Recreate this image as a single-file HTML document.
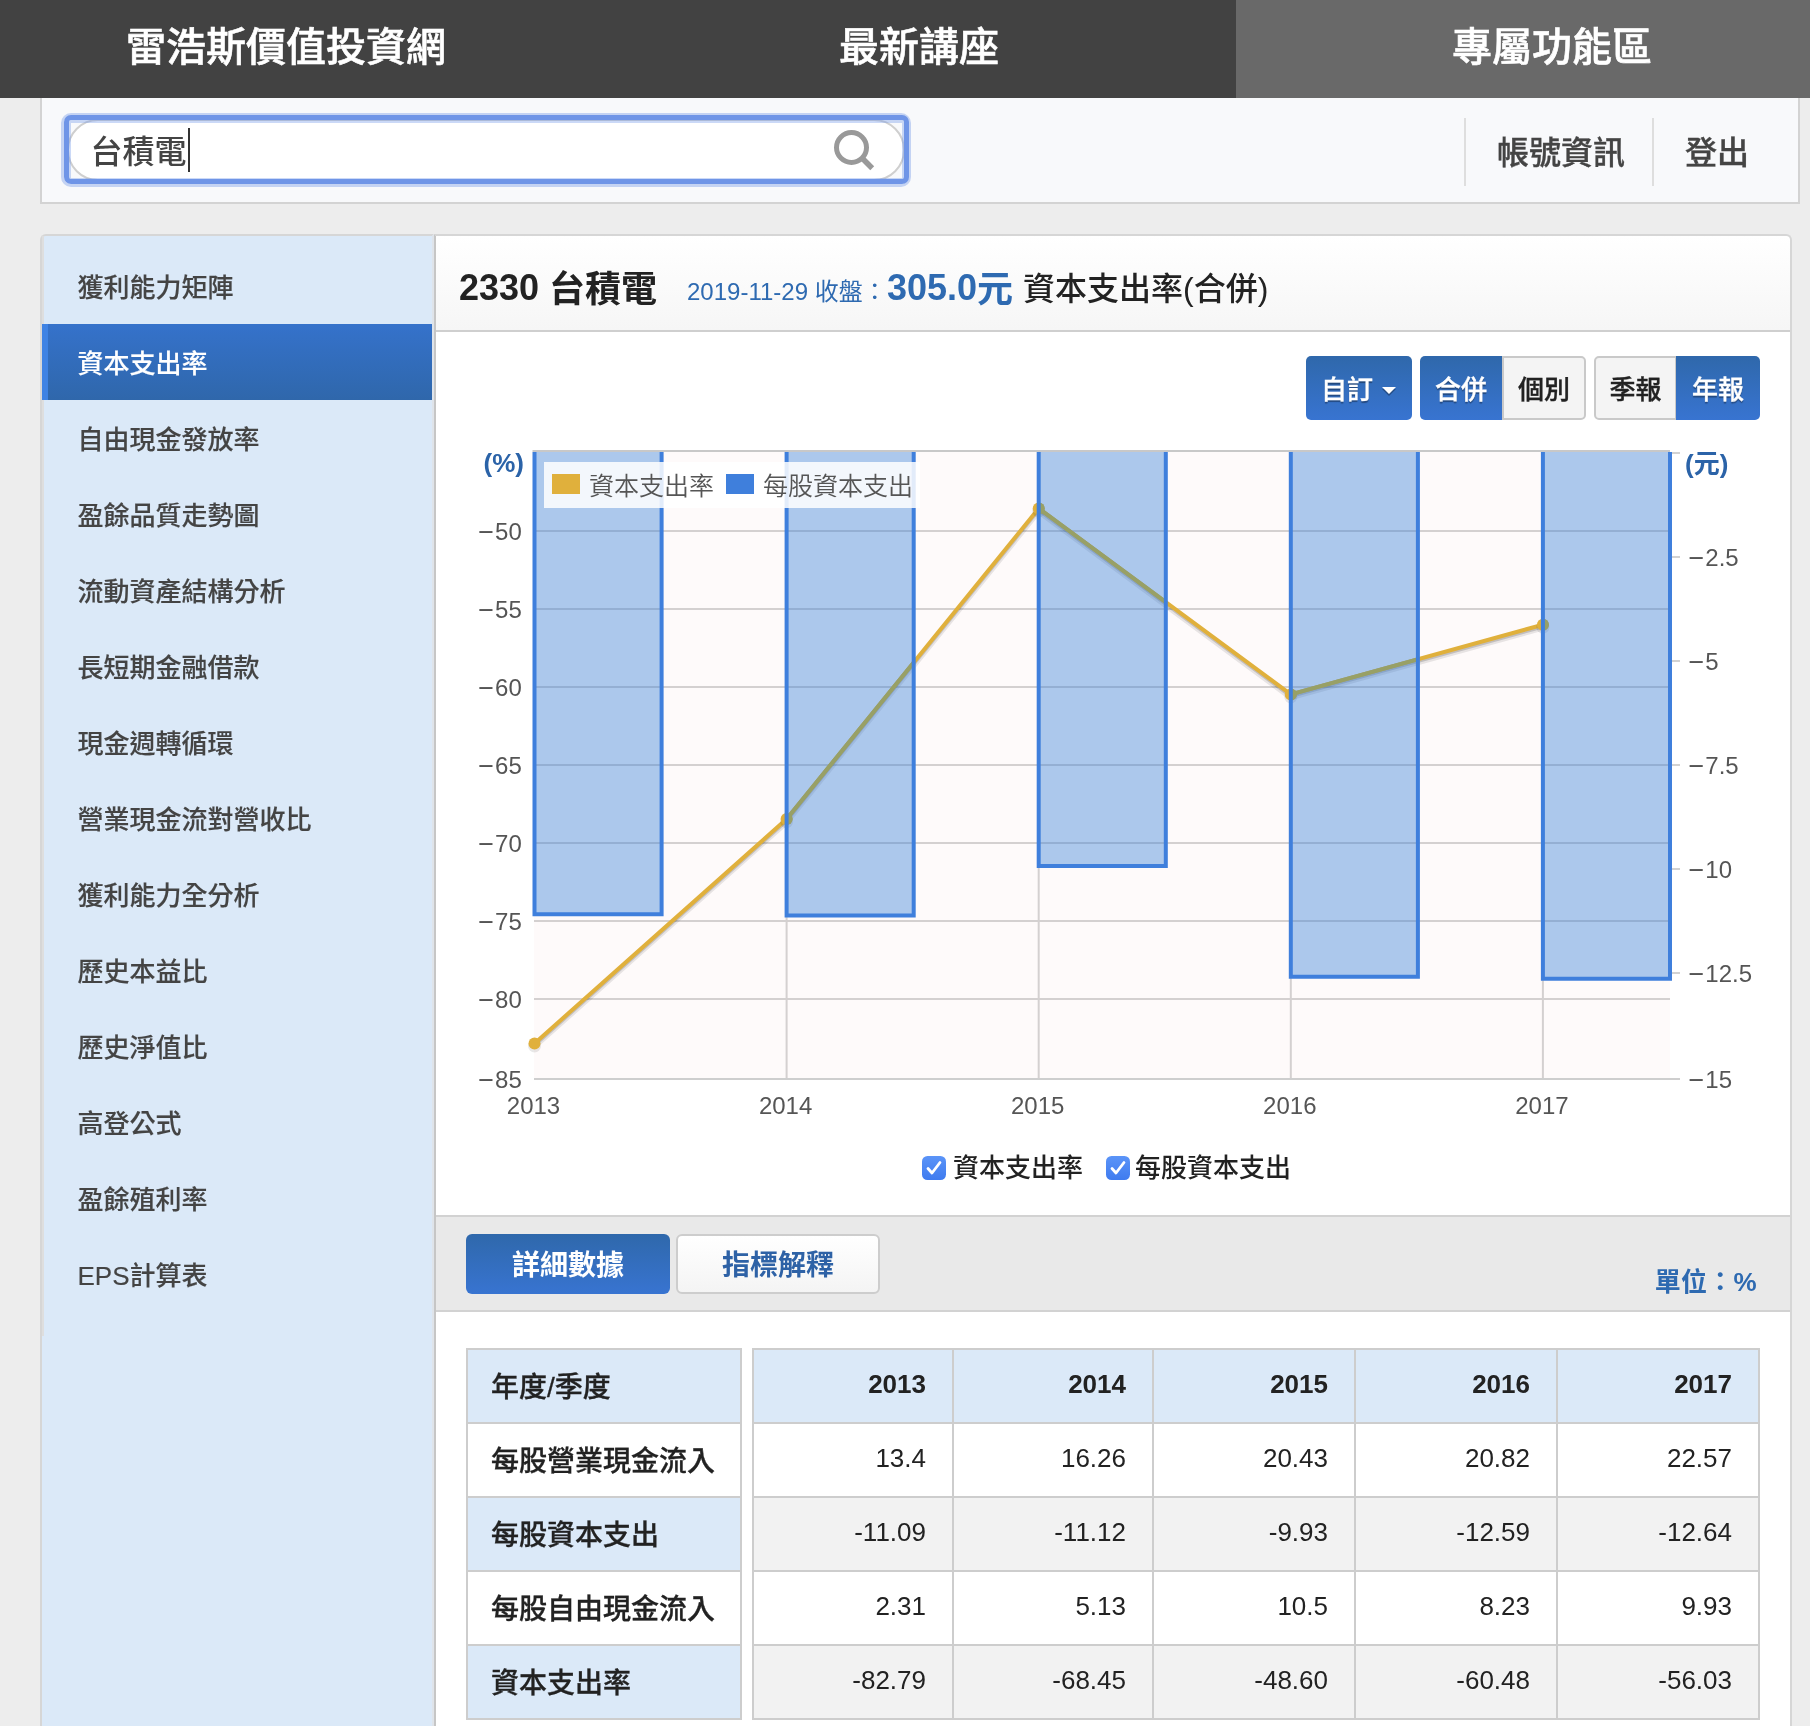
<!DOCTYPE html>
<html lang="zh-Hant">
<head>
<meta charset="utf-8">
<title>2330 台積電 資本支出率</title>
<style>
*{box-sizing:border-box;margin:0;padding:0}
html,body{width:1810px;height:1726px;overflow:hidden;background:#ededed}
body{position:relative;font-family:"Liberation Sans","Noto Sans CJK TC",sans-serif;color:#222;-webkit-font-smoothing:antialiased}
.abs{position:absolute}
.t{position:absolute;white-space:nowrap;line-height:1}
/* nav */
#nav{left:0;top:0;width:1810px;height:98px;background:#424242}
#nav .on{left:1236px;top:0;width:574px;height:98px;background:#696969}
#nav .t{color:#fff;font-weight:500;-webkit-text-stroke:.6px #fff;font-size:40px;top:27px;transform:translateX(-50%)}
/* search bar */
#bar{left:40px;top:98px;width:1760px;height:106px;background:#f8f9fb;border:2px solid #d3d3d3;border-top:none}
.sep{width:2px;height:68px;top:118px;background:#dedede}
.barlink{font-size:32px;font-weight:500;color:#444;top:137px;-webkit-text-stroke:.35px #444}
/* sidebar */
#side{left:40px;top:234px;width:394px;height:1500px;background:#dbe9f8;border-left:2px solid #d6d6d6;border-top:2px solid #d6d6d6;border-right:2px solid #dfe4ea;border-radius:6px 0 0 0}
#side .lb{left:0;top:0;width:2px;height:1100px;background:#dedede}
.mi{left:77.5px;font-size:26px;color:#444;font-weight:500;margin-top:1px;-webkit-text-stroke:.15px #444}
#act{left:42px;top:324px;width:390px;height:76px;background:linear-gradient(#3572cb,#2f67ab);border-left:6px solid #3f83e4}
/* panel */
#panel{left:434px;top:234px;width:1358px;height:1500px;background:#fff;border-left:2px solid #c6c6c6;border-top:2px solid #d6d6d6;border-right:2px solid #d6d6d6;border-radius:0 6px 0 0}
#phead{left:436px;top:236px;width:1354px;height:96px;background:linear-gradient(#fff,#f6f6f6);border-bottom:2px solid #cfcfcf;border-radius:0 6px 0 0}
.btn{height:64px;top:356px;font-size:26px;font-weight:500;text-align:center;line-height:68px;white-space:nowrap;-webkit-text-stroke:.35px currentColor}
.btn.b{background:linear-gradient(#2f68ab,#3874d1);color:#fff;text-shadow:0 2px 1px rgba(0,0,0,.35)}
.btn.w{background:#f4f4f4;border:2px solid #c9c9c9;color:#222;line-height:64px}
/* tabs */
#tabs{left:436px;top:1215px;width:1354px;height:97px;background:#e9e9e9;border-top:2px solid #d2d2d2;border-bottom:2px solid #d2d2d2}
/* table */
table{position:absolute;border-collapse:collapse;table-layout:fixed}
td,th{border:2px solid #cdcdcd;height:74px;font-size:26px;vertical-align:middle}
#tl{left:466px;top:1348px;width:276px}
#tl td{font-size:28px;font-weight:500;text-align:left;padding-left:23px;padding-bottom:2px;color:#222;-webkit-text-stroke:.3px #222}
#tr{left:752px;top:1348px;width:1006px}
#tr td,#tr th{text-align:right;padding-right:26px;padding-bottom:3px;color:#222}
.hl{background:#dbe9f8}
.gr{background:#f2f2f2}
.wh{background:#fff}
</style>
</head>
<body>
<div id="wrap" style="position:absolute;left:0;top:0;width:1810px;height:1726px;overflow:hidden;will-change:transform">
<!-- NAV -->
<div id="nav" class="abs">
  <div class="abs on"></div>
  <div class="t" style="left:286px">雷浩斯價值投資網</div>
  <div class="t" style="left:919px">最新講座</div>
  <div class="t" style="left:1552px">專屬功能區</div>
</div>
<!-- SEARCH BAR -->
<div id="bar" class="abs"></div>
<div class="abs" style="left:67px;top:119px;width:838px;height:62px;border:2px solid #cfcfcf;border-radius:31px;background:#fff"></div>
<div class="abs" style="left:61px;top:113px;width:850px;height:74px;border:3px solid rgba(111,149,232,.38);border-radius:10px"></div>
<div class="abs" style="left:63.5px;top:115.2px;width:845px;height:69.2px;border:5px solid #6f95e7;border-radius:7px"></div>
<div class="abs" style="left:68.5px;top:120px;width:835px;height:59.5px;border:2.5px solid rgba(111,149,232,.36);border-top-width:3.2px;border-radius:2px"></div>
<div class="t" style="left:90.5px;top:136px;font-size:32px;color:#444;font-weight:500">台積電</div>
<div class="abs" style="left:188px;top:128px;width:2px;height:44px;background:#333"></div>
<svg class="abs" style="left:826px;top:122px" width="56" height="56" viewBox="826 122 56 56"><circle cx="851.5" cy="147.5" r="15" fill="none" stroke="#999" stroke-width="5"/><line x1="862" y1="158" x2="872.2" y2="168.2" stroke="#999" stroke-width="5.5"/></svg>
<div class="abs sep" style="left:1464px"></div>
<div class="abs sep" style="left:1652px"></div>
<div class="t barlink" style="left:1497px">帳號資訊</div>
<div class="t barlink" style="left:1685px">登出</div>

<!-- SIDEBAR -->
<div id="side" class="abs"><div class="abs lb"></div></div>
<div id="act" class="abs"></div>
<div class="t mi" style="top:274px">獲利能力矩陣</div>
<div class="t mi" style="top:350px;color:#fff;font-weight:500;-webkit-text-stroke:.15px #fff">資本支出率</div>
<div class="t mi" style="top:426px">自由現金發放率</div>
<div class="t mi" style="top:502px">盈餘品質走勢圖</div>
<div class="t mi" style="top:578px">流動資產結構分析</div>
<div class="t mi" style="top:654px">長短期金融借款</div>
<div class="t mi" style="top:730px">現金週轉循環</div>
<div class="t mi" style="top:806px">營業現金流對營收比</div>
<div class="t mi" style="top:882px">獲利能力全分析</div>
<div class="t mi" style="top:958px">歷史本益比</div>
<div class="t mi" style="top:1034px">歷史淨值比</div>
<div class="t mi" style="top:1110px">高登公式</div>
<div class="t mi" style="top:1186px">盈餘殖利率</div>
<div class="t mi" style="top:1262px">EPS計算表</div>

<!-- PANEL -->
<div id="panel" class="abs"></div>
<div id="phead" class="abs"></div>
<div class="t" style="left:459px;top:270px;font-size:36px;font-weight:700;color:#222">2330 <span style="position:relative;top:1.5px">台積電</span></div>
<div class="t" style="left:687px;top:280px;font-size:24px;color:#2e6ab1">2019-11-29 收盤：</div>
<div class="t" style="left:887px;top:270px;font-size:36px;font-weight:700;color:#2e6ab1">305.0<span style="position:relative;top:1.5px">元</span></div>
<div class="t" style="left:1023px;top:273px;font-size:32px;font-weight:500;color:#222">資本支出率(合併)</div>

<!-- BUTTONS -->
<div class="abs btn b" style="left:1306px;width:106px;border-radius:5px;text-align:left;padding-left:15px">自訂</div>
<div class="abs" style="left:1382px;top:387px;width:0;height:0;border-left:7px solid transparent;border-right:7px solid transparent;border-top:7px solid #fff;filter:drop-shadow(0 2px 0 rgba(0,0,0,.3))"></div>
<div class="abs btn b" style="left:1420px;width:82px;border-radius:5px 0 0 5px">合併</div>
<div class="abs btn w" style="left:1502px;width:84px;border-radius:0 5px 5px 0">個別</div>
<div class="abs btn w" style="left:1594px;width:83px;border-radius:5px 0 0 5px">季報</div>
<div class="abs btn b" style="left:1676px;width:84px;border-radius:0 5px 5px 0">年報</div>

<!--CHART-->
<svg class="abs" style="left:436px;top:430px" width="1354" height="700" viewBox="436 430 1354 700" font-family="'Liberation Sans','Noto Sans CJK TC',sans-serif">
<defs><clipPath id="bc"><rect x="534.5" y="452.0" width="127.1" height="462.3"/><rect x="786.6" y="452.0" width="127.1" height="463.6"/><rect x="1038.7" y="452.0" width="127.1" height="414.1"/><rect x="1290.8" y="452.0" width="127.1" height="524.7"/><rect x="1542.9" y="452.0" width="127.1" height="526.8"/></clipPath></defs>
<rect x="534" y="452.0" width="1136.0" height="626.0" fill="#fefafa"/>
<rect x="534" y="998.0" width="1136.0" height="2" fill="#d4d0d0"/>
<rect x="534" y="920.0" width="1136.0" height="2" fill="#d4d0d0"/>
<rect x="534" y="842.0" width="1136.0" height="2" fill="#d4d0d0"/>
<rect x="534" y="764.0" width="1136.0" height="2" fill="#d4d0d0"/>
<rect x="534" y="686.0" width="1136.0" height="2" fill="#d4d0d0"/>
<rect x="534" y="608.0" width="1136.0" height="2" fill="#d4d0d0"/>
<rect x="534" y="530.0" width="1136.0" height="2" fill="#d4d0d0"/>
<rect x="785.6" y="452.0" width="2" height="626.0" fill="#d4d0d0"/>
<rect x="1037.7" y="452.0" width="2" height="626.0" fill="#d4d0d0"/>
<rect x="1289.8" y="452.0" width="2" height="626.0" fill="#d4d0d0"/>
<rect x="1541.9" y="452.0" width="2" height="626.0" fill="#d4d0d0"/>
<polyline points="534.5,1047.0 786.6,822.6 1038.7,511.9 1290.8,697.9 1542.9,628.2" fill="none" stroke="rgba(0,0,0,0.09)" stroke-width="5" stroke-linejoin="round"/>
<polyline points="534.5,1046.0 786.6,821.6 1038.7,510.9 1290.8,696.9 1542.9,627.2" fill="none" stroke="rgba(0,0,0,0.16)" stroke-width="2.5" stroke-linejoin="round"/>
<polyline points="534.5,1043.5 786.6,819.1 1038.7,508.4 1290.8,694.4 1542.9,624.7" fill="none" stroke="#e0b03c" stroke-width="4" stroke-linejoin="round"/>
<circle cx="534.5" cy="1046.0" r="6.5" fill="rgba(0,0,0,0.09)"/>
<circle cx="534.5" cy="1043.5" r="6" fill="#e0b03c"/>
<circle cx="786.6" cy="821.6" r="6.5" fill="rgba(0,0,0,0.09)"/>
<circle cx="786.6" cy="819.1" r="6" fill="#e0b03c"/>
<circle cx="1038.7" cy="510.9" r="6.5" fill="rgba(0,0,0,0.09)"/>
<circle cx="1038.7" cy="508.4" r="6" fill="#e0b03c"/>
<circle cx="1290.8" cy="696.9" r="6.5" fill="rgba(0,0,0,0.09)"/>
<circle cx="1290.8" cy="694.4" r="6" fill="#e0b03c"/>
<circle cx="1542.9" cy="627.2" r="6.5" fill="rgba(0,0,0,0.09)"/>
<circle cx="1542.9" cy="624.7" r="6" fill="#e0b03c"/>
<rect x="534.5" y="452.0" width="127.1" height="462.3" fill="rgba(56,128,216,0.41)"/>
<rect x="786.6" y="452.0" width="127.1" height="463.6" fill="rgba(56,128,216,0.41)"/>
<rect x="1038.7" y="452.0" width="127.1" height="414.1" fill="rgba(56,128,216,0.41)"/>
<rect x="1290.8" y="452.0" width="127.1" height="524.7" fill="rgba(56,128,216,0.41)"/>
<rect x="1542.9" y="452.0" width="127.1" height="526.8" fill="rgba(56,128,216,0.41)"/>
<g clip-path="url(#bc)"><polyline points="534.5,1043.5 786.6,819.1 1038.7,508.4 1290.8,694.4 1542.9,624.7" fill="none" stroke="#98a066" stroke-width="4" stroke-linejoin="round"/><circle cx="534.5" cy="1043.5" r="6" fill="#98a066"/><circle cx="786.6" cy="819.1" r="6" fill="#98a066"/><circle cx="1038.7" cy="508.4" r="6" fill="#98a066"/><circle cx="1290.8" cy="694.4" r="6" fill="#98a066"/><circle cx="1542.9" cy="624.7" r="6" fill="#98a066"/></g>
<path d="M534.5 452.0 V914.3 H661.6 V452.0" fill="none" stroke="#3f7fdc" stroke-width="4" stroke-linejoin="miter"/>
<path d="M786.6 452.0 V915.6 H913.7 V452.0" fill="none" stroke="#3f7fdc" stroke-width="4" stroke-linejoin="miter"/>
<path d="M1038.7 452.0 V866.1 H1165.8 V452.0" fill="none" stroke="#3f7fdc" stroke-width="4" stroke-linejoin="miter"/>
<path d="M1290.8 452.0 V976.7 H1417.9 V452.0" fill="none" stroke="#3f7fdc" stroke-width="4" stroke-linejoin="miter"/>
<path d="M1542.9 452.0 V978.8 H1670.0 V452.0" fill="none" stroke="#3f7fdc" stroke-width="4" stroke-linejoin="miter"/>
<rect x="532.5" y="450.0" width="1137.5" height="2" fill="#c8c8c8"/>
<rect x="534" y="1078.0" width="1146.0" height="2" fill="#cecece"/>
<rect x="1672.0" y="452.0" width="8" height="2" fill="#d2d2d2"/>
<rect x="1672.0" y="556.0" width="8" height="2" fill="#d2d2d2"/>
<rect x="1672.0" y="660.0" width="8" height="2" fill="#d2d2d2"/>
<rect x="1672.0" y="764.0" width="8" height="2" fill="#d2d2d2"/>
<rect x="1672.0" y="868.0" width="8" height="2" fill="#d2d2d2"/>
<rect x="1672.0" y="972.0" width="8" height="2" fill="#d2d2d2"/>
<rect x="544" y="462" width="376" height="46" fill="rgba(255,255,255,0.85)"/>
<rect x="552" y="474" width="28" height="20" fill="#e0b03c"/>
<rect x="726" y="474" width="28" height="20" fill="#3f7fdc"/>
<text x="589" y="494.5" font-size="25" font-weight="350" fill="#555">資本支出率</text>
<text x="763" y="494.5" font-size="25" font-weight="350" fill="#555">每股資本支出</text>
<text x="521.8" y="1088.0" font-size="24" fill="#555" text-anchor="end"><tspan font-size="27" letter-spacing="1" dy="0.6">−</tspan><tspan dy="-0.6">85</tspan></text>
<text x="521.8" y="1008.0" font-size="24" fill="#555" text-anchor="end"><tspan font-size="27" letter-spacing="1" dy="0.6">−</tspan><tspan dy="-0.6">80</tspan></text>
<text x="521.8" y="930.0" font-size="24" fill="#555" text-anchor="end"><tspan font-size="27" letter-spacing="1" dy="0.6">−</tspan><tspan dy="-0.6">75</tspan></text>
<text x="521.8" y="852.0" font-size="24" fill="#555" text-anchor="end"><tspan font-size="27" letter-spacing="1" dy="0.6">−</tspan><tspan dy="-0.6">70</tspan></text>
<text x="521.8" y="774.0" font-size="24" fill="#555" text-anchor="end"><tspan font-size="27" letter-spacing="1" dy="0.6">−</tspan><tspan dy="-0.6">65</tspan></text>
<text x="521.8" y="696.0" font-size="24" fill="#555" text-anchor="end"><tspan font-size="27" letter-spacing="1" dy="0.6">−</tspan><tspan dy="-0.6">60</tspan></text>
<text x="521.8" y="618.0" font-size="24" fill="#555" text-anchor="end"><tspan font-size="27" letter-spacing="1" dy="0.6">−</tspan><tspan dy="-0.6">55</tspan></text>
<text x="521.8" y="540.0" font-size="24" fill="#555" text-anchor="end"><tspan font-size="27" letter-spacing="1" dy="0.6">−</tspan><tspan dy="-0.6">50</tspan></text>
<text x="1688.5" y="566.0" font-size="24" fill="#555"><tspan font-size="27" letter-spacing="1" dy="0.6">−</tspan><tspan dy="-0.6">2.5</tspan></text>
<text x="1688.5" y="670.0" font-size="24" fill="#555"><tspan font-size="27" letter-spacing="1" dy="0.6">−</tspan><tspan dy="-0.6">5</tspan></text>
<text x="1688.5" y="774.0" font-size="24" fill="#555"><tspan font-size="27" letter-spacing="1" dy="0.6">−</tspan><tspan dy="-0.6">7.5</tspan></text>
<text x="1688.5" y="878.0" font-size="24" fill="#555"><tspan font-size="27" letter-spacing="1" dy="0.6">−</tspan><tspan dy="-0.6">10</tspan></text>
<text x="1688.5" y="982.0" font-size="24" fill="#555"><tspan font-size="27" letter-spacing="1" dy="0.6">−</tspan><tspan dy="-0.6">12.5</tspan></text>
<text x="1688.5" y="1088.0" font-size="24" fill="#555"><tspan font-size="27" letter-spacing="1" dy="0.6">−</tspan><tspan dy="-0.6">15</tspan></text>
<text x="533.5" y="1114" font-size="24" fill="#555" text-anchor="middle">2013</text>
<text x="785.6" y="1114" font-size="24" fill="#555" text-anchor="middle">2014</text>
<text x="1037.7" y="1114" font-size="24" fill="#555" text-anchor="middle">2015</text>
<text x="1289.8" y="1114" font-size="24" fill="#555" text-anchor="middle">2016</text>
<text x="1541.9" y="1114" font-size="24" fill="#555" text-anchor="middle">2017</text>
<text x="483.5" y="472" font-size="26" font-weight="700" fill="#2b63a8">(%)</text>
<text x="1685" y="472.5" font-size="26" font-weight="700" fill="#2b63a8">(元)</text>
</svg>
<!--/CHART-->

<!-- CHECKBOX LEGEND -->
<svg class="abs" style="left:922px;top:1156px" width="24" height="24" viewBox="0 0 24 24"><defs><linearGradient id="cg" x1="0" y1="0" x2="0" y2="1"><stop offset="0" stop-color="#5b94f8"/><stop offset="1" stop-color="#3f7bef"/></linearGradient></defs><rect width="24" height="24" rx="5.5" fill="url(#cg)"/><path d="M6 12.5 L10 17 L18 6.5" fill="none" stroke="#fff" stroke-width="2.8" stroke-linecap="round" stroke-linejoin="round"/></svg>
<div class="t" style="left:953px;top:1155px;font-size:26px;font-weight:500;color:#222">資本支出率</div>
<svg class="abs" style="left:1106px;top:1156px" width="24" height="24" viewBox="0 0 24 24"><rect width="24" height="24" rx="5.5" fill="url(#cg)"/><path d="M6 12.5 L10 17 L18 6.5" fill="none" stroke="#fff" stroke-width="2.8" stroke-linecap="round" stroke-linejoin="round"/></svg>
<div class="t" style="left:1135px;top:1155px;font-size:26px;font-weight:500;color:#222">每股資本支出</div>

<!-- TABS -->
<div id="tabs" class="abs"></div>
<div class="abs" style="left:466px;top:1234px;width:204px;height:60px;border-radius:6px;background:linear-gradient(#2f68ab,#3874d1);color:#fff;font-size:28px;font-weight:700;text-align:center;line-height:64px">詳細數據</div>
<div class="abs" style="left:676px;top:1234px;width:204px;height:60px;border-radius:6px;background:linear-gradient(#fff,#f4f4f4);border:2px solid #cdcdcd;color:#2e62a6;font-size:28px;font-weight:700;text-align:center;line-height:60px">指標解釋</div>
<div class="t" style="right:53px;top:1268.5px;font-size:26px;font-weight:700;color:#2e6ab1;letter-spacing:.3px">單位：%</div>

<!-- TABLES -->
<table id="tl">
<tr><td class="hl">年度/季度</td></tr>
<tr><td class="wh">每股營業現金流入</td></tr>
<tr><td class="hl">每股資本支出</td></tr>
<tr><td class="wh">每股自由現金流入</td></tr>
<tr><td class="hl">資本支出率</td></tr>
</table>
<table id="tr">
<colgroup><col style="width:200px"><col style="width:200px"><col style="width:202px"><col style="width:202px"><col style="width:202px"></colgroup>
<tr><th class="hl">2013</th><th class="hl">2014</th><th class="hl">2015</th><th class="hl">2016</th><th class="hl">2017</th></tr>
<tr><td class="wh">13.4</td><td class="wh">16.26</td><td class="wh">20.43</td><td class="wh">20.82</td><td class="wh">22.57</td></tr>
<tr><td class="gr">-11.09</td><td class="gr">-11.12</td><td class="gr">-9.93</td><td class="gr">-12.59</td><td class="gr">-12.64</td></tr>
<tr><td class="wh">2.31</td><td class="wh">5.13</td><td class="wh">10.5</td><td class="wh">8.23</td><td class="wh">9.93</td></tr>
<tr><td class="gr">-82.79</td><td class="gr">-68.45</td><td class="gr">-48.60</td><td class="gr">-60.48</td><td class="gr">-56.03</td></tr>
</table>
</div>
</body>
</html>
